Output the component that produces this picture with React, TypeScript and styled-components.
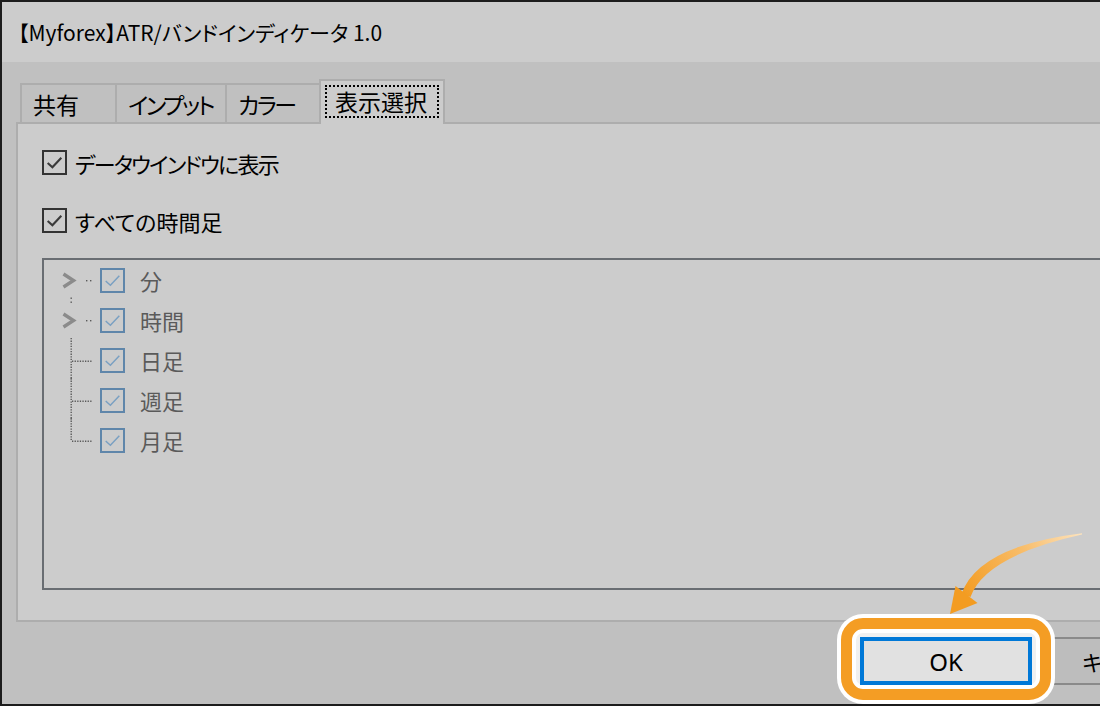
import styled, { createGlobalStyle } from 'styled-components';

const GlobalStyle = createGlobalStyle`
  html, body {
    margin: 0;
    padding: 0;
    background: #1c1c1c;
    overflow: hidden;
  }
  * {
    box-sizing: border-box;
  }
`;

const JP = `"Noto Sans CJK JP", "Noto Sans", sans-serif`;

type TreeKind = 'expand' | 'expandFirst' | 'leaf' | 'leafLast';

const treeItems: { label: string; kind: TreeKind }[] = [
  { label: '分', kind: 'expandFirst' },
  { label: '時間', kind: 'expand' },
  { label: '日足', kind: 'leaf' },
  { label: '週足', kind: 'leaf' },
  { label: '月足', kind: 'leafLast' },
];

function CheckMark({ color, size, width }: { color: string; size: number; width: number }) {
  return (
    <svg width={size} height={size} viewBox="0 0 20 20">
      <polyline points="3.5,10.5 8,14.5 16.5,5.5" fill="none" stroke={color} strokeWidth={width} />
    </svg>
  );
}

function TreeGuide({ kind }: { kind: TreeKind }) {
  const dot = '#5a5a5a';
  if (kind === 'expand' || kind === 'expandFirst') {
    return (
      <GuideSvg width="56" height="40">
        <polyline points="19.5,14 29.5,20.5 19.5,27" fill="none" stroke="#8b8b8b" strokeWidth="3.4" />
        <rect x="42" y="20" width="1.4" height="1.4" fill={dot} />
        <rect x="46" y="20" width="1.4" height="1.4" fill={dot} />
        {kind === 'expandFirst' && (
          <>
            <rect x="26.5" y="37.5" width="1.4" height="1.4" fill={dot} />
            <rect x="26.5" y="41.5" width="1.4" height="1.4" fill={dot} />
          </>
        )}
      </GuideSvg>
    );
  }
  return (
    <GuideSvg width="56" height="40">
      <line
        x1="27.2"
        y1="-2"
        x2="27.2"
        y2={kind === 'leafLast' ? 21 : 40}
        stroke={dot}
        strokeWidth="1.4"
        strokeDasharray="1.3 1.3"
      />
      <line x1="28" y1="21.2" x2="48" y2="21.2" stroke={dot} strokeWidth="1.4" strokeDasharray="1.3 1.3" />
    </GuideSvg>
  );
}

export default function App() {
  return (
    <>
      <GlobalStyle />
      <Window>
        <TitleBar>【Myforex】ATR/バンドインディケータ 1.0</TitleBar>
        <Body>
          <TabStrip>
            <Tab $width={95}>共有</Tab>
            <Tab $width={110} $tight>
              インプット
            </Tab>
            <Tab $width={94} $tight>
              カラー
            </Tab>
            <ActiveTab>
              <FocusRing>表示選択</FocusRing>
            </ActiveTab>
          </TabStrip>
          <Panel>
            <CheckRow>
              <CheckBox>
                <CheckMark color="#3a3a3a" size={21} width={2} />
              </CheckBox>
              <CheckLabel $tight>データウインドウに表示</CheckLabel>
            </CheckRow>
            <CheckRow>
              <CheckBox>
                <CheckMark color="#3a3a3a" size={21} width={2} />
              </CheckBox>
              <CheckLabel>すべての時間足</CheckLabel>
            </CheckRow>
            <TreeBox>
              {treeItems.map((item) => (
                <TreeRow key={item.label}>
                  <TreeGuide kind={item.kind} />
                  <TreeCheck>
                    <CheckMark color="#7aa0c2" size={21} width={1.4} />
                  </TreeCheck>
                  <TreeLabel>{item.label}</TreeLabel>
                </TreeRow>
              ))}
            </TreeBox>
          </Panel>
          <ButtonRow>
            <OkWrap>
              <Highlight />
              <OkButton>OK</OkButton>
            </OkWrap>
            <DimButton>キャンセル</DimButton>
          </ButtonRow>
        </Body>
        <ArrowSvg width="1100" height="706" viewBox="0 0 1100 706">
          <defs>
            <linearGradient id="arrowFade" x1="1082" y1="534" x2="965" y2="596" gradientUnits="userSpaceOnUse">
              <stop offset="0" stopColor="#fde3bd" />
              <stop offset="0.45" stopColor="#f8bd6a" />
              <stop offset="1" stopColor="#f39c22" />
            </linearGradient>
          </defs>
          <path d="M 1082 533.2 Q 978 546 961.5 594 L 970.5 597 Q 985 556 1082 534.6 Z" fill="url(#arrowFade)" />
          <polygon points="950,614 955.5,586 977.5,603" fill="#f39c22" />
        </ArrowSvg>
      </Window>
    </>
  );
}

const Window = styled.div`
  position: relative;
  width: 1100px;
  height: 706px;
  overflow: hidden;
  display: flex;
  flex-direction: column;
  border-left: 2px solid #1c1c1c;
  border-top: 2px solid #1c1c1c;
  border-bottom: 2px solid #1c1c1c;
  font-family: ${JP};
  font-feature-settings: 'palt';
`;

const TitleBar = styled.div`
  height: 60px;
  flex: none;
  display: flex;
  align-items: center;
  padding-left: 16px;
  background: #cccccc;
  color: #000;
  font-size: 21px;
  white-space: nowrap;
`;

const Body = styled.div`
  flex: 1;
  display: flex;
  flex-direction: column;
  padding: 17px 0 0 14px;
  background: #c0c0c0;
`;

const TabStrip = styled.div`
  display: flex;
  align-items: flex-end;
  padding-left: 4px;
  margin-bottom: -2px;
  position: relative;
  z-index: 1;
`;

const Tab = styled.div<{ $width: number; $tight?: boolean }>`
  width: ${({ $width }) => $width}px;
  height: 39px;
  margin-bottom: 2px;
  display: flex;
  align-items: center;
  padding-left: 11px;
  border-top: 2px solid #adadad;
  border-left: 2px solid #adadad;
  background: #c0c0c0;
  color: #000;
  font-size: 23px;
  letter-spacing: ${({ $tight }) => ($tight ? '-2.4px' : '0')};
  white-space: nowrap;
  overflow: hidden;
`;

const ActiveTab = styled.div`
  width: 126px;
  height: 45px;
  padding: 4px;
  border: 2px solid #adadad;
  border-bottom: none;
  background: #cccccc;
`;

const FocusRing = styled.div`
  width: 114px;
  height: 33px;
  margin: 0 auto;
  display: flex;
  align-items: center;
  padding-left: 8px;
  padding-bottom: 2px;
  border: 2px dotted #000;
  color: #000;
  font-size: 23px;
  white-space: nowrap;
`;

const Panel = styled.div`
  display: flex;
  flex-direction: column;
  padding: 26px 0 30px 24px;
  border: 2px solid #adadad;
  border-right: none;
  background: #cccccc;
`;

const CheckRow = styled.div`
  display: flex;
  align-items: center;
  gap: 8px;
  height: 25px;
  margin-bottom: 33px;

  & + & {
    margin-bottom: 25px;
  }
`;

const CheckBox = styled.div`
  width: 25px;
  height: 25px;
  flex: none;
  display: flex;
  align-items: center;
  justify-content: center;
  border: 2px solid #333333;
  background: #cccccc;
`;

const CheckLabel = styled.span<{ $tight?: boolean }>`
  color: #000;
  font-size: 22px;
  letter-spacing: ${({ $tight }) => ($tight ? '-1.8px' : '0')};
  white-space: nowrap;
`;

const TreeBox = styled.div`
  height: 332px;
  border: 2px solid #696d72;
  border-right: none;
  background: #cccccc;
`;

const TreeRow = styled.div`
  height: 40px;
  display: flex;
  align-items: center;
`;

const GuideSvg = styled.svg`
  flex: none;
  overflow: visible;
`;

const TreeCheck = styled.div`
  width: 25px;
  height: 25px;
  flex: none;
  display: flex;
  align-items: center;
  justify-content: center;
  border: 2px solid #5f86aa;
  background: #cccccc;
`;

const TreeLabel = styled.span`
  margin-left: 15px;
  color: #5a5a5a;
  font-size: 22px;
  white-space: nowrap;
`;

const ButtonRow = styled.div`
  display: flex;
  justify-content: flex-end;
  gap: 14px;
  margin-top: 15px;
  margin-right: -118px;
`;

const OkWrap = styled.div`
  position: relative;
`;

const Highlight = styled.div`
  position: absolute;
  top: -19px;
  left: -19px;
  right: -19px;
  bottom: -15px;
  border: 11px solid #f49d24;
  border-radius: 22px;
  background: #f0f0f0;
  box-shadow:
    0 0 0 4px #ffffff,
    inset 0 0 0 4px #ffffff;
`;

const OkButton = styled.div`
  position: relative;
  width: 172px;
  height: 48px;
  display: flex;
  align-items: center;
  justify-content: center;
  border: 4px solid #0078d7;
  background: #e1e1e1;
  color: #000;
  font-family: 'Noto Sans', sans-serif;
  font-size: 24px;
`;

const DimButton = styled.div`
  width: 172px;
  height: 48px;
  display: flex;
  align-items: center;
  justify-content: center;
  border: 2px solid #8a8a8a;
  background: #bdbdbd;
  color: #000;
  font-size: 22px;
  white-space: nowrap;
`;

const ArrowSvg = styled.svg`
  position: absolute;
  left: -2px;
  top: -2px;
  pointer-events: none;
`;
